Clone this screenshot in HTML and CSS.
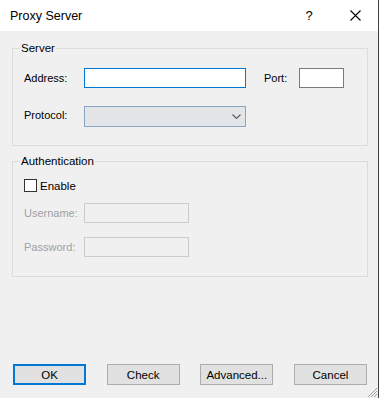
FILE: index.html
```html
<!DOCTYPE html>
<html lang="en">
<head>
  <meta charset="UTF-8">
  <title>Proxy Server</title>
  <link rel="stylesheet" href="styles.css">
</head>
<body>
  <div class="window">
    <!-- Title bar -->
    <div class="titlebar">
      <span class="title">Proxy Server</span>
      <span class="caption-btn help">?</span>
      <span class="caption-btn close">
        <svg width="11" height="11" viewBox="0 0 11 11"><path d="M0.5 0.5 L10.5 10.5 M10.5 0.5 L0.5 10.5" stroke="#000" stroke-width="1.1" fill="none"/></svg>
      </span>
    </div>

    <div class="body">
      <!-- Server -->
      <fieldset class="group server">
        <legend>Server</legend>
        <div class="row">
          <label class="lbl">Address:</label>
          <div class="edit address"></div>
          <label class="lbl port-lbl">Port:</label>
          <div class="edit port"></div>
        </div>
        <div class="row row-proto">
          <label class="lbl">Protocol:</label>
          <div class="combo">
            <svg width="9" height="5" viewBox="0 0 9 5"><path d="M0.5 0.5 L4.5 4.5 L8.5 0.5" stroke="#5a5a5a" stroke-width="1.1" fill="none"/></svg>
          </div>
        </div>
      </fieldset>

      <!-- Authentication -->
      <fieldset class="group auth">
        <legend>Authentication</legend>
        <div class="check-row">
          <span class="checkbox"></span>
          <span>Enable</span>
        </div>
        <div class="row row-user">
          <label class="lbl disabled">Username:</label>
          <div class="edit off"></div>
        </div>
        <div class="row row-pass">
          <label class="lbl disabled">Password:</label>
          <div class="edit off"></div>
        </div>
      </fieldset>

      <!-- Buttons -->
      <div class="buttons">
        <button class="btn default">OK</button>
        <button class="btn">Check</button>
        <button class="btn">Advanced...</button>
        <button class="btn">Cancel</button>
      </div>
    </div>

    <svg class="grip" width="11" height="11" viewBox="0 0 11 11">
      <path d="M10 1 L1 10 M10 4 L4 10 M10 7 L7 10" stroke="#a0a0a0" stroke-width="1" fill="none"/>
    </svg>
  </div>
</body>
</html>
```

FILE: styles.css
```css
/* Base */
body {
  margin: 0;
  font-family: "Liberation Sans", Arial, sans-serif;
  font-size: 11px;
  color: #000;
  background: #f0f0f0;
}

.window {
  position: relative;
  width: 379px;
  height: 398px;
  box-sizing: border-box;
  border-right: 1px solid #3f3f3f;
  background: #f0f0f0;
  display: flex;
  flex-direction: column;
}

/* Title bar */
.titlebar {
  height: 31px;
  background: #fff;
  display: flex;
  align-items: center;
  padding-left: 10px;
  flex-shrink: 0;
}

.title {
  flex: 1;
  font-size: 12.5px;
}

.caption-btn {
  width: 46px;
  height: 31px;
  display: flex;
  align-items: center;
  justify-content: center;
}

.help {
  font-size: 13px;
}

/* Content */
.body {
  flex: 1;
  display: flex;
  flex-direction: column;
  padding: 10px 0 13px 12px;
}

.group {
  width: 356px;
  box-sizing: border-box;
  margin: 0;
  border: 1px solid #dcdcdc;
  padding: 13px 0 0 11px;
  min-width: 0;
}

.group legend {
  padding: 0 1px;
  margin-left: -4px;
  line-height: 14px;
  font-size: 11.5px;
}

.server {
  height: 105px;
}

.auth {
  margin-top: 8px;
  height: 123px;
  padding-top: 11px;
}

.row {
  display: flex;
  align-items: center;
  height: 20px;
}

.row-proto {
  margin-top: 17px;
  height: 22px;
}

.row-proto .lbl {
  margin-top: -3px;
}

.row-user {
  margin-top: 11px;
}

.row-pass {
  margin-top: 14px;
}

.lbl {
  width: 60px;
  flex-shrink: 0;
}

.lbl.disabled {
  color: #a0a0a0;
}

.port-lbl {
  width: 35px;
  margin-left: 18px;
}

/* Edits */
.edit {
  height: 20px;
  box-sizing: border-box;
  background: #fff;
  border: 1px solid #7a7a7a;
}

.edit.address {
  width: 162px;
  border-color: #0078d7;
}

.edit.port {
  width: 45px;
}

.edit.off {
  width: 105px;
  background: #f0f0f0;
  border-color: #cccccc;
}

.combo {
  width: 162px;
  height: 21px;
  box-sizing: border-box;
  background: #e3e5e8;
  border: 1px solid #8aa5c2;
  display: flex;
  align-items: center;
  justify-content: flex-end;
  padding-right: 4px;
}

/* Checkbox */
.check-row {
  display: flex;
  align-items: center;
  gap: 3px;
  height: 13px;
  font-size: 11.5px;
}

.checkbox {
  width: 13px;
  height: 13px;
  box-sizing: border-box;
  border: 1px solid #333;
  background: #fff;
}

/* Buttons */
.buttons {
  margin-top: auto;
  width: 354px;
  display: flex;
  justify-content: space-between;
  padding-left: 1px;
}

.btn {
  width: 73px;
  height: 21px;
  box-sizing: border-box;
  background: #e1e1e1;
  border: 1px solid #adadad;
  font-family: inherit;
  font-size: 11.5px;
  color: #000;
  padding: 0;
}

.btn.default {
  border: 2px solid #0078d7;
}

.grip {
  position: absolute;
  right: 0;
  bottom: 0;
}
```
